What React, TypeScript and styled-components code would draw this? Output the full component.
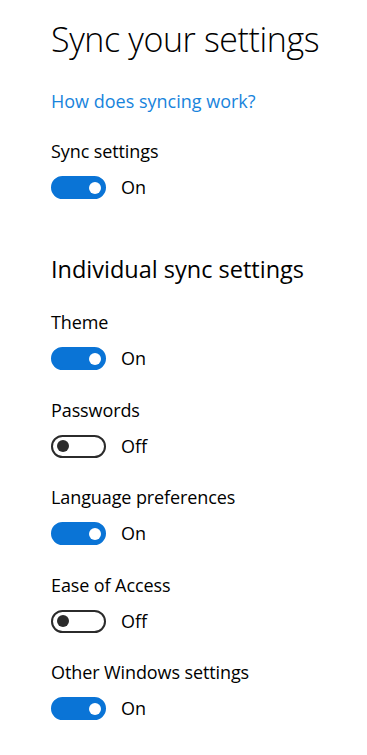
import React from "react";
import styled, { createGlobalStyle } from "styled-components";

const Global = createGlobalStyle`
  html, body { margin: 0; padding: 0; background: #ffffff; }
  body { font-family: "Open Sans", "Noto Sans", "Liberation Sans", sans-serif; color: #000; }
`;

const Page = styled.main`
  display: flex;
  flex-direction: column;
  align-items: flex-start;
  padding: 15px 0 0 51px;
  width: 367px;
  height: 755px;
  box-sizing: border-box;
`;

const Title = styled.h1`
  margin: 0;
  font-size: 34px;
  font-weight: 300;
  line-height: 48px;
  letter-spacing: -0.4px;
`;

const Link = styled.a`
  margin-top: 26px;
  font-size: 18px;
  line-height: 24px;
  color: #1884dc;
  text-decoration: none;
`;

const SectionTitle = styled.h2`
  margin: 54px 0 0;
  font-size: 23.5px;
  font-weight: 400;
  line-height: 32px;
`;

const Setting = styled.section<{ $gap: number }>`
  display: flex;
  flex-direction: column;
  margin-top: ${(p) => p.$gap}px;
`;

const Label = styled.div`
  font-size: 18px;
  line-height: 24px;
  letter-spacing: -0.1px;
`;

const ToggleRow = styled.div`
  display: flex;
  align-items: center;
  gap: 15px;
  margin-top: 13px;
  height: 23px;
`;

const Track = styled.span<{ $on: boolean }>`
  position: relative;
  display: inline-block;
  width: 55px;
  height: 23px;
  box-sizing: border-box;
  border-radius: 12px;
  background: ${(p) => (p.$on ? "#0a74d6" : "#fff")};
  border: 2.5px solid ${(p) => (p.$on ? "#0a74d6" : "#2b2b2b")};
`;

const Knob = styled.span<{ $on: boolean }>`
  position: absolute;
  top: 50%;
  width: 12px;
  height: 12px;
  margin-top: -6px;
  border-radius: 50%;
  background: ${(p) => (p.$on ? "#fff" : "#2b2b2b")};
  ${(p) => (p.$on ? "right: 3px;" : "left: 4px;")}
`;

const State = styled.span`
  font-size: 18px;
  line-height: 23px;
`;

function Toggle({ on }: { on: boolean }) {
  return (
    <ToggleRow>
      <Track $on={on}>
        <Knob $on={on} />
      </Track>
      <State>{on ? "On" : "Off"}</State>
    </ToggleRow>
  );
}

const items: { label: string; on: boolean }[] = [
  { label: "Theme", on: true },
  { label: "Passwords", on: false },
  { label: "Language preferences", on: true },
  { label: "Ease of Access", on: false },
  { label: "Other Windows settings", on: true },
];

export default function App() {
  return (
    <>
      <Global />
      <Page>
        <Title>Sync your settings</Title>
        <Link href="#">How does syncing work?</Link>
        <Setting $gap={26}>
          <Label>Sync settings</Label>
          <Toggle on />
        </Setting>
        <SectionTitle>Individual sync settings</SectionTitle>
        {items.map((it, i) => (
          <Setting key={it.label} $gap={i === 0 ? 25 : 27.5}>
            <Label>{it.label}</Label>
            <Toggle on={it.on} />
          </Setting>
        ))}
      </Page>
    </>
  );
}
